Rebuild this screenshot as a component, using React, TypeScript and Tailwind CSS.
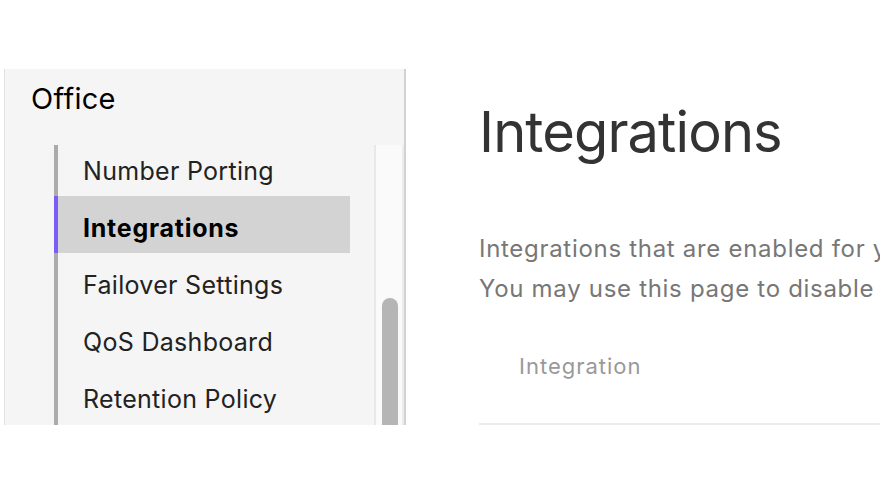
import React from "react";

const items = ["Number Porting", "Integrations", "Failover Settings", "QoS Dashboard", "Retention Policy", "Call Recording"];

export default function App() {
  return (
    <div
      className="w-[880px] h-[495px] overflow-hidden bg-white flex items-start pt-[69px] pl-[4px]"
      style={{ fontFamily: "Inter, 'Noto Sans', sans-serif" }}
    >
      <aside className="w-[402px] h-[356px] shrink-0 flex flex-col bg-[#f5f5f5] border-l border-[#e2e2e2] border-r-2 border-r-[#d2d2d2]">
        <div className="h-[76px] shrink-0 pl-[26px] pt-[12px] text-[29px] leading-[36px] tracking-[0.3px] text-black">Office</div>
        <div className="flex-1 flex overflow-hidden">
          <div className="flex-1 pl-[49px] pr-[24px] overflow-hidden">
            <ul className="border-l-[4px] border-[#ababab] -mt-[6px]">
              {items.map((it) => {
                const active = it === "Integrations";
                return (
                  <li
                    key={it}
                    className={
                      "relative h-[57px] flex items-center pl-[25px] pt-[8px] text-[25px] " +
                      (active ? "bg-[#d3d3d3] font-bold text-black tracking-[0.75px]" : "text-[#222] tracking-[0.3px]")
                    }
                  >
                    {active && <span className="absolute -left-[4px] top-0 bottom-0 w-[4px] bg-[#7b5cf5]" />}
                    {it}
                  </li>
                );
              })}
            </ul>
          </div>
          <div className="w-[30px] shrink-0 bg-[#fafafa] border-l-2 border-[#e8e8e8] border-r-2 border-r-[#ececec] pt-[153px] pl-[6px]">
            <div className="w-[16px] h-[200px] rounded-full bg-[#b5b5b5]" />
          </div>
        </div>
      </aside>
      <main className="pl-[73px] shrink-0 w-[900px]">
        <h1 className="text-[56px] leading-[64px] text-[#333] tracking-[-0.9px] mt-[31px]">Integrations</h1>
        <p className="mt-[65px] text-[24px] leading-[40px] text-[#777] tracking-[0.7px] whitespace-nowrap">
          Integrations that are enabled for your office are listed below.
          <br />
          You may use this page to disable integrations you no longer need.
        </p>
        <div className="mt-[45px] border-b-2 border-[#ebebeb] h-[71px] pl-[40px] text-[22px] leading-[24px] tracking-[1px] text-[#999]">
          Integration
        </div>
      </main>
    </div>
  );
}
